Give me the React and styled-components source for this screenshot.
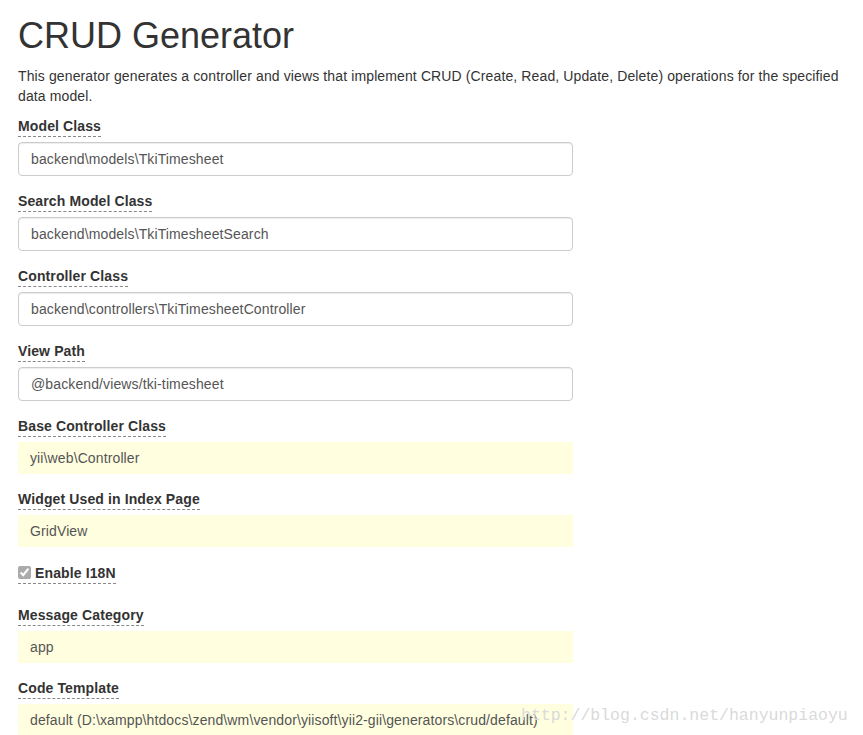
import React from 'react';
import styled, { createGlobalStyle } from 'styled-components';

const GlobalStyle = createGlobalStyle`
  html, body {
    margin: 0;
    padding: 0;
    background: #fff;
  }
  body {
    font-family: "Liberation Sans", Arial, sans-serif;
    font-size: 14px;
    line-height: 20px;
    letter-spacing: 0.12px;
    color: #333;
  }
`;

const Page = styled.div`
  position: relative;
  padding: 0 18px;
  width: 827px;
  overflow: hidden;
`;

const Title = styled.h1`
  margin: 16px 0 10px;
  font-size: 36px;
  font-weight: 400;
  line-height: 1.1;
  letter-spacing: 0;
  color: #333;
`;

const Description = styled.p`
  margin: 0 0 10px;
`;

const FormGroup = styled.div`
  padding-top: ${p => (p.$check ? '1px' : '0')};
  margin-bottom: ${p => (p.$check ? '21px' : '15px')};
  width: 555px;
`;

const Label = styled.label`
  display: inline-flex;
  align-items: center;
  gap: ${p => (p.$check ? '4px' : '0')};
  margin-bottom: ${p => (p.$check ? '0' : '5px')};
  font-weight: 700;
  border-bottom: 1px dashed #888;
  cursor: help;
`;

const Input = styled.input`
  display: block;
  box-sizing: border-box;
  width: 100%;
  height: ${p => (p.$sticky ? '32px' : '34px')};
  padding: 6px 12px;
  font-family: "Liberation Sans", Arial, sans-serif;
  font-size: 14px;
  line-height: 20px;
  letter-spacing: 0.12px;
  color: #555;
  background: ${p => (p.$sticky ? '#ffffe0' : '#fff')};
  border: ${p => (p.$sticky ? 'none' : '1px solid #ccc')};
  border-radius: ${p => (p.$sticky ? '0' : '4px')};
  box-shadow: ${p => (p.$sticky ? 'none' : 'inset 0 1px 1px rgba(0,0,0,.075)')};
  outline: none;
`;

const Check = styled.input`
  margin: 0;
  width: 13px;
  height: 13px;
  accent-color: #888;
  opacity: 0.7;
`;

const Watermark = styled.div`
  position: absolute;
  left: 521px;
  top: 706px;
  font-family: "Liberation Mono", "DejaVu Sans Mono", monospace;
  font-size: 16.5px;
  line-height: 20px;
  letter-spacing: 0;
  color: #dadada;
  pointer-events: none;
  white-space: nowrap;
`;

const fields = [
  { label: 'Model Class', value: 'backend\\models\\TkiTimesheet' },
  { label: 'Search Model Class', value: 'backend\\models\\TkiTimesheetSearch' },
  { label: 'Controller Class', value: 'backend\\controllers\\TkiTimesheetController' },
  { label: 'View Path', value: '@backend/views/tki-timesheet' },
  { label: 'Base Controller Class', value: 'yii\\web\\Controller', sticky: true },
  { label: 'Widget Used in Index Page', value: 'GridView', sticky: true },
  { label: 'Enable I18N', check: true },
  { label: 'Message Category', value: 'app', sticky: true },
  { label: 'Code Template', value: 'default (D:\\xampp\\htdocs\\zend\\wm\\vendor\\yiisoft\\yii2-gii\\generators\\crud/default)', sticky: true },
];

export default function App() {
  return (
    <Page>
      <GlobalStyle />
      <Title>CRUD Generator</Title>
      <Description>
        This generator generates a controller and views that implement CRUD (Create, Read, Update, Delete) operations for the specified data model.
      </Description>
      {fields.map(f =>
        f.check ? (
          <FormGroup key={f.label} $check>
            <Label $check>
              <Check type="checkbox" defaultChecked />
              {f.label}
            </Label>
          </FormGroup>
        ) : (
          <FormGroup key={f.label}>
            <Label>{f.label}</Label>
            <Input $sticky={f.sticky} defaultValue={f.value} readOnly={f.sticky} />
          </FormGroup>
        )
      )}
      <Watermark>http://blog.csdn.net/hanyunpiaoyu</Watermark>
    </Page>
  );
}
